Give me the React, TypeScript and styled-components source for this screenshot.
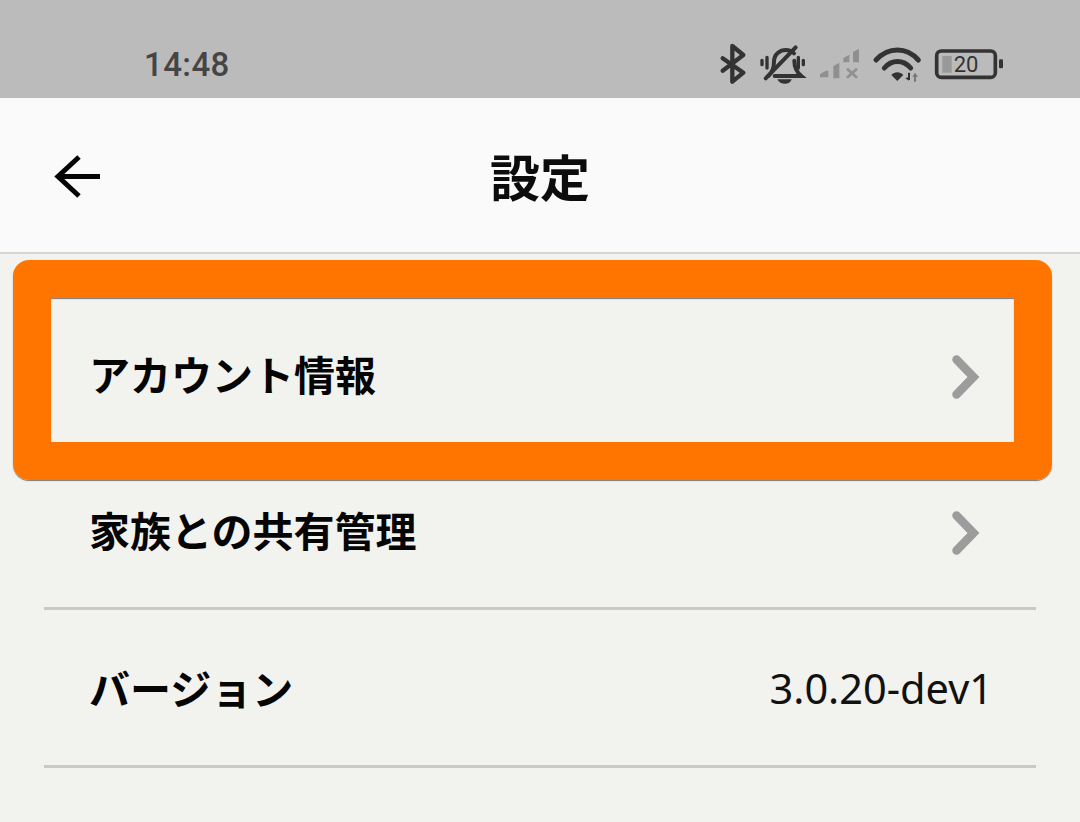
import React from "react";
import styled, { createGlobalStyle } from "styled-components";

const GlobalStyle = createGlobalStyle`
  html, body {
    margin: 0;
    padding: 0;
    background: #f2f2ee;
    font-family: "Noto Sans CJK JP", "Noto Sans", sans-serif;
  }
`;

const Page = styled.div`
  position: relative;
  width: 1080px;
  height: 822px;
  overflow: hidden;
  background: #f2f2ee;
`;

const StatusBar = styled.div`
  height: 98px;
  background: #bbbbbb;
  display: flex;
  align-items: flex-start;
  padding: 30px 60px 0 144px;
  box-sizing: border-box;
  justify-content: space-between;
`;

const Time = styled.span`
  font-family: Roboto, sans-serif;
  font-size: 33px;
  font-weight: 500;
  color: #454545;
  line-height: 70px;
  letter-spacing: 0.4px;
`;

const StatusIcons = styled.svg`
  display: block;
`;

const Header = styled.header`
  height: 156px;
  box-sizing: border-box;
  background: #fafafa;
  border-bottom: 2px solid #d6d6d4;
  display: flex;
  align-items: center;
  justify-content: center;
  position: relative;
`;

const BackButton = styled.svg`
  position: absolute;
  left: 54px;
  top: 56px;
`;

const Title = styled.h1`
  margin: 0;
  font-size: 50px;
  font-weight: 700;
  color: #0c0c0c;
  line-height: 1;
`;

const List = styled.div`
  padding: 44px 44px 0;
`;

const Row = styled.div<{ $h: number }>`
  height: ${p => p.$h}px;
  box-sizing: border-box;
  display: flex;
  align-items: center;
  justify-content: space-between;
  padding: 0 46px 0 45px;
  border-bottom: 3px solid #c9c9c5;
`;

const RowLabel = styled.span`
  font-size: 41px;
  font-weight: 700;
  color: #050505;
  margin-top: -2px;
`;

const RowValue = styled.span`
  font-family: "Noto Sans", sans-serif;
  font-size: 41.5px;
  color: #111;
  margin-right: -3px;
`;

const ChevronIcon = styled.svg`
  margin-right: 10px;
  margin-top: 5px;
`;

const Highlight = styled.div`
  position: absolute;
  left: 13px;
  top: 260px;
  width: 1039px;
  height: 220px;
  box-sizing: border-box;
  border: solid #ff7500;
  border-width: 38px;
  border-radius: 16px;
  box-shadow: 0 1px 1px rgba(0, 0, 0, 0.5), inset 0 1px 1px rgba(0, 0, 0, 0.5);
`;

const Chevron = () => (
  <ChevronIcon width="28" height="44" viewBox="0 0 28 44" fill="none">
    <path d="M4.5 4.5 L21.5 22 L4.5 39.5" stroke="#9c9c9c" strokeWidth="8.5" strokeLinecap="round" strokeLinejoin="miter" />
  </ChevronIcon>
);

// drawn on a 3x grid so the strokes can be read straight off a zoomed crop
const Icons = () => (
  <StatusIcons width="320" height="70" viewBox="0 0 960 210" fill="none">
    {/* bluetooth */}
    <path d="M68 85 L130 128 L97 155 V48 L130 75 L68 122" stroke="#333" strokeWidth="13" strokeLinejoin="round" strokeLinecap="round" />
    {/* muted bell */}
    <g stroke="#333" strokeLinecap="round" fill="none">
      <path d="M186 91 V104 M310 91 V104" strokeWidth="10" />
      <path d="M201 82 V114 M295 82 V114" strokeWidth="10" />
      <path d="M205 138 C222 122 222 104 222 95 C222 72 240 60 258 60 C268 60 276 64 282 70" strokeWidth="12" />
      <path d="M283 92 C283 112 290 126 304 138 H224" strokeWidth="12" />
      <path d="M287 52 L197 145" strokeWidth="12" />
    </g>
    <path d="M232 148 H275 C270 166 240 166 232 148 Z" fill="#333" />
    {/* signal */}
    <g fill="#909090">
      <path d="M360 142 V132 L378 122 H385 V142 Z" />
      <path d="M400 145 V108 L418 98 V145 Z" />
      <path d="M430 97 V84 L448 74 V97 Z" />
      <path d="M459 97 V66 L477 56 V97 Z" />
    </g>
    <path d="M441 116 L471 143 M471 116 L441 143" stroke="#909090" strokeWidth="8" />
    {/* wifi */}
    <g stroke="#333" strokeWidth="15" fill="none" strokeLinecap="round">
      <path d="M528 90 C565 50 620 50 655 90" />
      <path d="M553 114 C575 88 610 88 632 114" />
    </g>
    <path d="M574 135 C584 124 600 124 610 135 L592 153 Z" fill="#333" />
    <path d="M627 128 V150" stroke="#333" strokeWidth="6" />
    <path d="M616 145 L627 152 V140 Z" fill="#333" />
    <path d="M645 132 V155" stroke="#777" strokeWidth="6" />
    <path d="M637 140 L645 128 L654 140 Z" fill="#777" />
    {/* battery */}
    <rect x="710" y="63" width="176" height="79" rx="14" stroke="#333" strokeWidth="11" />
    <rect x="727" y="78" width="28" height="50" fill="#999" />
    <rect x="897" y="88" width="12" height="27" rx="4" fill="#333" />
    <text x="798" y="126" textAnchor="middle" fontFamily="Roboto, sans-serif" fontSize="66" fill="#333">20</text>
  </StatusIcons>
);

export default function App() {
  return (
    <Page>
      <GlobalStyle />
      <StatusBar>
        <Time>14:48</Time>
        <Icons />
      </StatusBar>
      <Header>
        <BackButton width="48" height="44" viewBox="0 0 48 44" fill="none">
          <path d="M25 3 L4 22.5 L25 42 M4 22.5 H46" stroke="#050505" strokeWidth="5" />
        </BackButton>
        <Title>設定</Title>
      </Header>
      <List>
        <Row $h={155}>
          <RowLabel>アカウント情報</RowLabel>
          <Chevron />
        </Row>
        <Row $h={157}>
          <RowLabel>家族との共有管理</RowLabel>
          <Chevron />
        </Row>
        <Row $h={158}>
          <RowLabel>バージョン</RowLabel>
          <RowValue>3.0.20-dev1</RowValue>
        </Row>
      </List>
      <Highlight />
    </Page>
  );
}
